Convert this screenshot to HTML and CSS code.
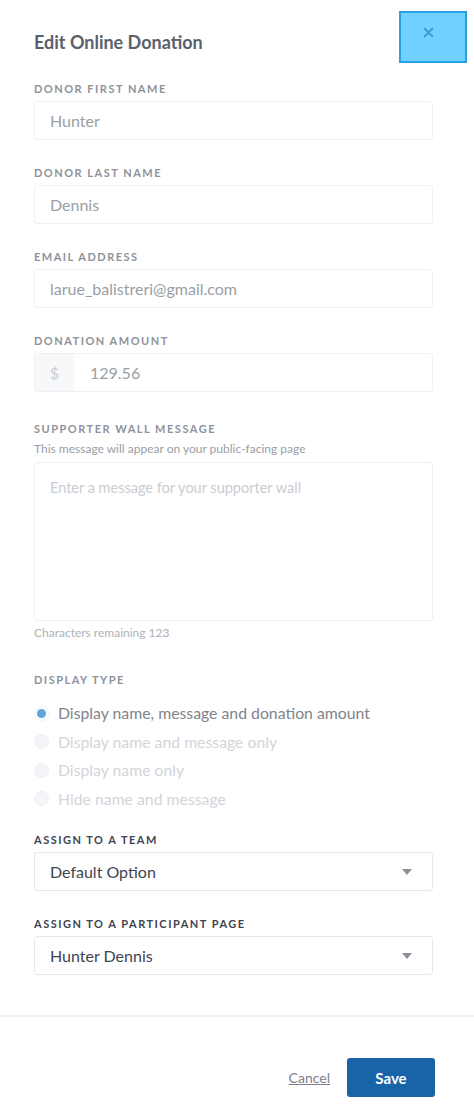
FILE: index.html
```html
<!DOCTYPE html>
<html lang="en">
<head>
    <meta charset="UTF-8">
    <meta name="viewport" content="width=device-width, initial-scale=1.0">
    <title>Edit Online Donation</title>
    <link rel="stylesheet" href="styles.css">
</head>
<body>

<div class="modal">
    <div class="modal-body">
        <h2 class="modal-title">Edit Online Donation</h2>
        <button class="close-btn" type="button" aria-label="Close">
            <svg width="11" height="11" viewBox="0 0 11 11">
                <path d="M1 1L10 10M10 1L1 10" stroke="#3b9bd3" stroke-width="1.8" fill="none"/>
            </svg>
        </button>

        <div class="field">
            <label class="field-label">Donor First Name</label>
            <input class="text-input" type="text" value="Hunter">
        </div>

        <div class="field">
            <label class="field-label">Donor Last Name</label>
            <input class="text-input" type="text" value="Dennis">
        </div>

        <div class="field">
            <label class="field-label">Email Address</label>
            <input class="text-input" type="text" value="larue_balistreri@gmail.com">
        </div>

        <div class="field field-amount">
            <label class="field-label">Donation Amount</label>
            <div class="input-group">
                <span class="addon">$</span>
                <input class="group-input" type="text" value="129.56">
            </div>
        </div>

        <div class="field field-message">
            <label class="field-label">Supporter Wall Message</label>
            <p class="help-text">This message will appear on your public-facing page</p>
            <textarea class="text-area" placeholder="Enter a message for your supporter wall"></textarea>
            <p class="char-count">Characters remaining 123</p>
        </div>

        <div class="field field-radios">
            <label class="field-label">Display Type</label>
            <div class="radio-list">
                <div class="radio-row checked"><span class="radio"></span>Display name, message and donation amount</div>
                <div class="radio-row disabled"><span class="radio"></span>Display name and message only</div>
                <div class="radio-row disabled"><span class="radio"></span>Display name only</div>
                <div class="radio-row disabled"><span class="radio"></span>Hide name and message</div>
            </div>
        </div>

        <div class="field">
            <label class="field-label dark">Assign to a Team</label>
            <div class="select-box">
                <span>Default Option</span>
                <span class="caret"></span>
            </div>
        </div>

        <div class="field">
            <label class="field-label dark">Assign to a Participant Page</label>
            <div class="select-box">
                <span>Hunter Dennis</span>
                <span class="caret"></span>
            </div>
        </div>
    </div>

    <div class="modal-footer">
        <a class="cancel-link" href="#">Cancel</a>
        <button class="save-btn" type="button">Save</button>
    </div>
</div>

</body>
</html>
```

FILE: styles.css
```css
body {
    margin: 0;
    font-family: Lato, "Open Sans", sans-serif;
    background-color: #fff;
}
.modal {
    position: relative;
    width: 474px;
}
.modal-body {
    padding: 30px 41px 0 34px;
}
.modal-title {
    margin: 0 0 28px;
    font-size: 18px;
    line-height: 24px;
    font-weight: bold;
    color: #5a616e;
}
.close-btn {
    position: absolute;
    top: 11px;
    right: 7px;
    width: 68px;
    height: 52px;
    box-sizing: border-box;
    border: 2px solid #2aa0e4;
    background-color: #70d0ff;
    padding: 14px 0 0 22px;
    display: flex;
    align-items: flex-start;
    justify-content: flex-start;
    cursor: pointer;
}
.field {
    margin-bottom: 26px;
}
.field-amount {
    margin-bottom: 30px;
}
.field-message {
    margin-bottom: 32px;
}
.field-radios {
    margin-bottom: 20px;
}
.field-label {
    display: block;
    font-size: 11px;
    line-height: 14px;
    font-weight: bold;
    letter-spacing: 1.5px;
    text-transform: uppercase;
    color: #8e929a;
    margin-bottom: 5px;
}
.field-label.dark {
    color: #3e4450;
}
.text-input,
.text-area,
.group-input {
    font-family: inherit;
    font-size: 16px;
    color: #9a9ea5;
    outline: none;
}
.text-input {
    display: block;
    width: 100%;
    height: 39px;
    box-sizing: border-box;
    border: 1px solid #eef0f3;
    border-radius: 3px;
    padding: 0 15px;
}
.input-group {
    display: flex;
    height: 39px;
    box-sizing: border-box;
    border: 1px solid #eef0f3;
    border-radius: 3px;
    overflow: hidden;
}
.addon {
    width: 39px;
    background-color: #f7f8fa;
    color: #c9ccd2;
    font-size: 16px;
    display: flex;
    align-items: center;
    justify-content: center;
}
.group-input {
    flex: 1;
    border: none;
    padding: 0 16px;
    min-width: 0;
}
.help-text {
    margin: 3px 0 5px;
    font-size: 12px;
    line-height: 16px;
    color: #9a9ea5;
}
.text-area {
    display: block;
    width: 100%;
    height: 159px;
    box-sizing: border-box;
    border: 1px solid #eef0f3;
    border-radius: 3px;
    padding: 16px 15px;
    resize: none;
    line-height: 18px;
}
.text-area::placeholder {
    color: #c9ccd3;
    font-size: 14.5px;
}
.char-count {
    margin: 4px 0 0;
    font-size: 12px;
    line-height: 16px;
    color: #aeb2b8;
}
.radio-list {
    margin-top: 12px;
}
.radio-row {
    display: flex;
    align-items: center;
    font-size: 15.8px;
    line-height: 28.5px;
    color: #80848c;
}
.radio-row.disabled {
    color: #d2d5da;
}
.radio {
    width: 15px;
    height: 15px;
    border-radius: 50%;
    margin-right: 9px;
    box-sizing: border-box;
    position: relative;
}
.checked .radio {
    border: 1px solid #edf2f8;
    background-color: #fff;
}
.checked .radio::after {
    content: "";
    position: absolute;
    top: 2px;
    left: 2px;
    width: 9px;
    height: 9px;
    border-radius: 50%;
    background-color: #62a5d8;
}
.disabled .radio {
    background-color: #f3f5f8;
    border: 1px solid #eef1f5;
}
.select-box {
    height: 39px;
    box-sizing: border-box;
    border: 1px solid #e6e8ec;
    border-radius: 3px;
    padding: 0 15px;
    display: flex;
    align-items: center;
    justify-content: space-between;
    font-size: 16px;
    color: #3e4451;
}
.caret {
    width: 0;
    height: 0;
    border-left: 5px solid transparent;
    border-right: 5px solid transparent;
    border-top: 6px solid #8a8f99;
    margin-right: 5px;
}
.modal-footer {
    margin-top: 40px;
    border-top: 2px solid #f1f2f4;
    padding: 41px 39px 0 0;
    display: flex;
    justify-content: flex-end;
    align-items: center;
    gap: 17px;
}
.cancel-link {
    font-size: 14px;
    color: #7c828b;
    text-decoration: underline;
}
.save-btn {
    width: 88px;
    height: 39px;
    border: none;
    border-radius: 3px;
    background-color: #1963a9;
    color: #fff;
    font-family: inherit;
    font-size: 15px;
    font-weight: bold;
    cursor: pointer;
}
```
